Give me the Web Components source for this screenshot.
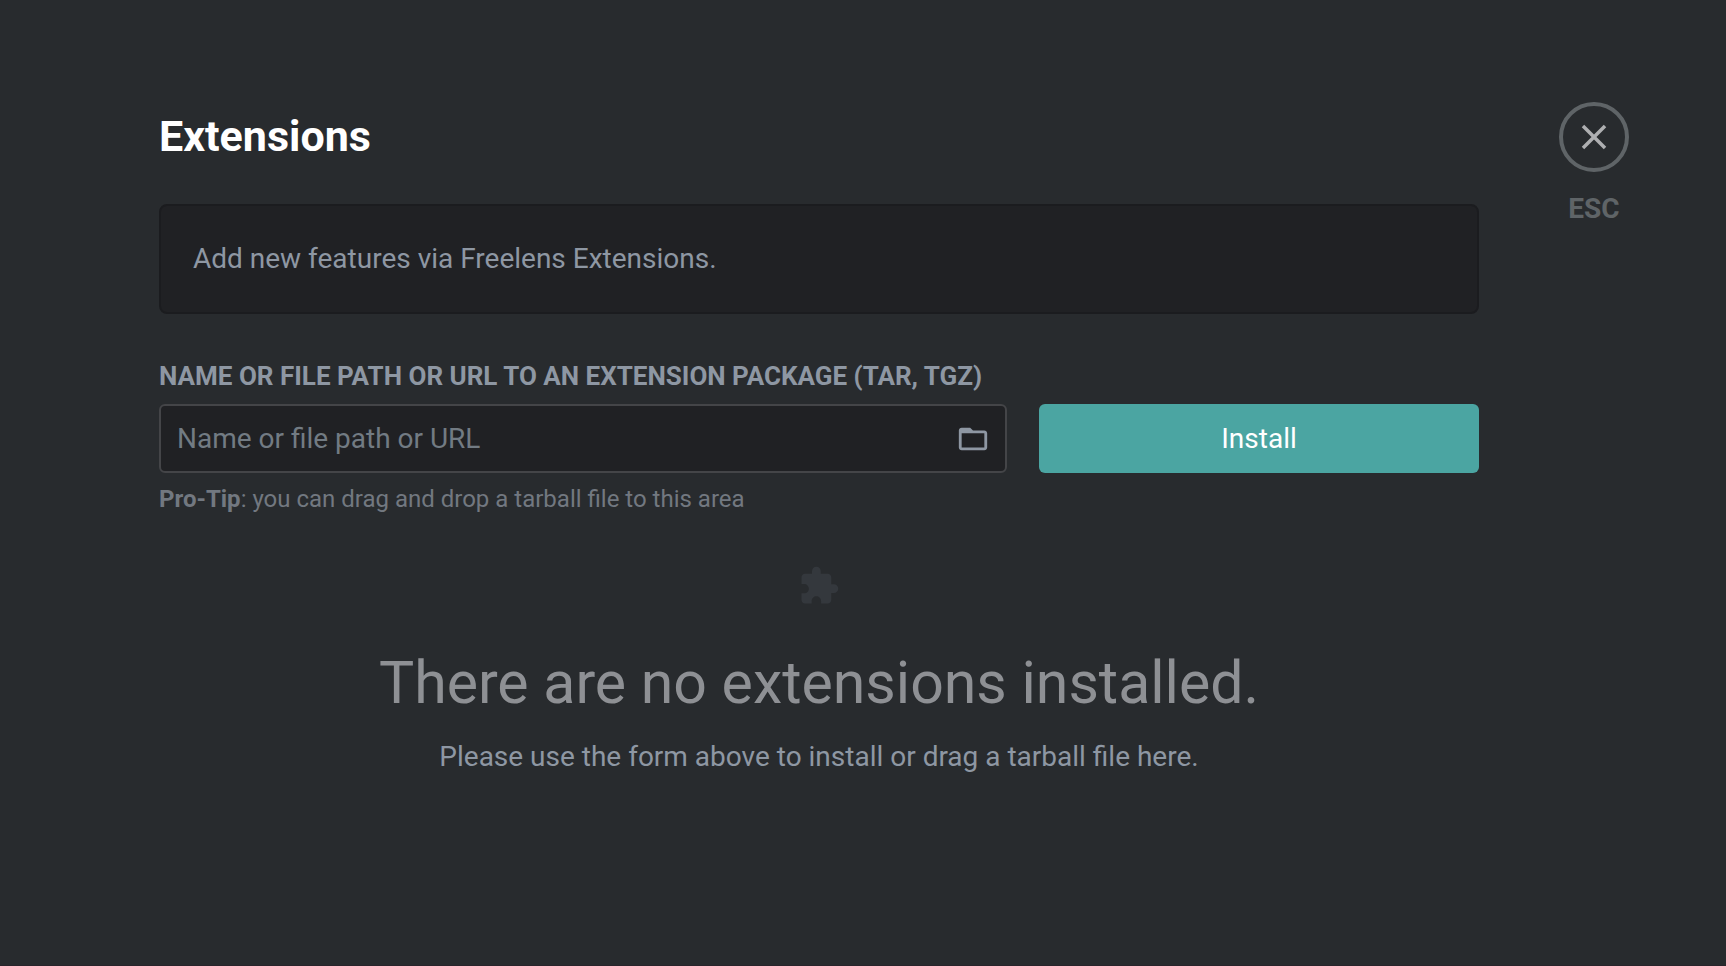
<!DOCTYPE html>
<html lang="en">
<head>
<meta charset="utf-8">
<title>Extensions</title>
<style>
  html, body { margin: 0; min-height: 100%; }
  body {
    background: #282b2e;
    font-family: Roboto, "Liberation Sans", sans-serif;
    font-size: 28px;
    line-height: 40px;
    color: #8e97a3;
  }
</style>
</head>
<body>
<extensions-page></extensions-page>
<script>
const define = (name, html, setup) => {
  const template = document.createElement("template");
  template.innerHTML = html;
  customElements.define(name, class extends HTMLElement {
    constructor() {
      super();
      this.attachShadow({ mode: "open" }).append(template.content.cloneNode(true));
    }
    connectedCallback() { if (setup) setup(this); }
  });
};

define("page-title", `
  <style>
    :host { display: block; }
    h1 { margin: 0; font-size: 43px; line-height: 60px; font-weight: 700; color: #fff; }
  </style>
  <h1><slot></slot></h1>`);

define("notice-panel", `
  <style>
    :host { display: block; box-sizing: border-box; padding: 32px; border: 2px solid #1b1c1f; border-radius: 8px; background: #202124; }
    p { margin: 0; line-height: 42px; }
  </style>
  <p><slot></slot></p>`);

define("install-form", `
  <style>
    :host { display: block; }
    label { display: block; font-size: 26px; line-height: 40px; font-weight: 700; text-transform: uppercase; }
    .row { display: grid; grid-template-columns: minmax(0, 1fr) minmax(0, 440px); gap: 32px; height: 69px; margin-top: 8px; }
    .field { display: flex; align-items: center; box-sizing: border-box; border: 2px solid #444548; border-radius: 6px; background: #202124; padding: 0 15px 0 16px; }
    input { flex: 1; min-width: 0; padding: 0; border: 0; outline: 0; background: none; font: inherit; color: #fff; }
    input::placeholder { color: #727b83; opacity: 1; }
    button { margin: 0; padding: 0; border: 0; font: inherit; cursor: pointer; }
    .browse { display: block; background: none; color: #8e97a3; }
    svg { display: block; width: 34px; height: 34px; fill: currentColor; }
    .install { border-radius: 6px; background: #4ba5a2; color: #fff; }
    small { display: block; margin-top: 8px; font-size: 24px; line-height: 36px; color: #727880; }
  </style>
  <form>
    <label for="source">Name or file path or URL to an extension package (tar, tgz)</label>
    <div class="row">
      <div class="field">
        <input id="source" type="text" placeholder="Name or file path or URL">
        <button class="browse" type="button" aria-label="Browse">
          <svg viewBox="0 0 24 24"><path fill-rule="evenodd" d="M4 4H10L12 6H20C21.1 6 22 6.900 22 8V18C22 19.1 21.1 20 20 20H4C2.900 20 2 19.1 2 18V6C2 4.900 2.900 4 4 4ZM4 8V18H20V8Z"/></svg>
        </button>
      </div>
      <button class="install" type="submit">Install</button>
    </div>
    <small><b>Pro-Tip</b>: you can drag and drop a tarball file to this area</small>
  </form>`, el => el.shadowRoot.querySelector("form").addEventListener("submit", e => e.preventDefault()));

define("empty-state", `
  <style>
    :host { display: flex; flex-direction: column; align-items: center; text-align: center; }
    svg { width: 42px; height: 42px; fill: #34383d; }
    h2 { margin: 34px 0 0; font-size: 59px; line-height: 84px; font-weight: 400; color: #8e9094; }
    p { margin: 12px 0 0; }
  </style>
  <svg viewBox="0 0 24 24" aria-hidden="true"><path d="M20.5 11H19V7c0-1.100-.9-2-2-2h-4V3.5C13 2.120 11.880 1 10.500 1S8 2.120 8 3.500V5H4c-1.100 0-1.990.9-1.990 2v3.800H3.500c1.490 0 2.700 1.210 2.700 2.700s-1.210 2.700-2.700 2.700H2V20c0 1.100.9 2 2 2h3.800v-1.500c0-1.490 1.210-2.700 2.700-2.700 1.490 0 2.700 1.210 2.700 2.700V22H17c1.100 0 2-.9 2-2v-4h1.500c1.380 0 2.500-1.120 2.500-2.500S21.880 11 20.500 11z"/></svg>
  <h2><slot name="heading"></slot></h2>
  <p><slot></slot></p>`);

define("close-control", `
  <style>
    :host { display: flex; flex-direction: column; align-items: center; color: #5f6467; }
    button { display: grid; place-items: center; box-sizing: border-box; width: 70px; height: 70px; padding: 0; border: 4px solid currentColor; border-radius: 50%; background: none; color: inherit; cursor: pointer; }
    svg { width: 42px; height: 42px; fill: #aeafb1; }
    span { margin-top: 17px; font-weight: 700; }
  </style>
  <button type="button" aria-label="Close"><svg viewBox="0 0 24 24"><path d="M19 6.410L17.590 5 12 10.590 6.410 5 5 6.410 10.590 12 5 17.590 6.410 19 12 13.410 17.590 19 19 17.590 13.410 12z"/></svg></button>
  <span>ESC</span>`);

define("extensions-page", `
  <style>
    :host { display: grid; grid-template-columns: minmax(0, 1fr) 70px; column-gap: 80px; align-items: start; box-sizing: border-box; min-height: 100vh; padding: 102px 97px 64px 159px; border-bottom: 1px solid #29242b; }
    main { display: flex; flex-direction: column; padding-top: 4px; }
    notice-panel { margin-top: 38px; }
    install-form { margin-top: 42px; }
    empty-state { margin-top: 48px; }
  </style>
  <main>
    <page-title>Extensions</page-title>
    <notice-panel>Add new features via Freelens Extensions.</notice-panel>
    <install-form></install-form>
    <empty-state><span slot="heading">There are no extensions installed.</span>Please use the form above to install or drag a tarball file here.</empty-state>
  </main>
  <close-control></close-control>`);
</script>
</body>
</html>
